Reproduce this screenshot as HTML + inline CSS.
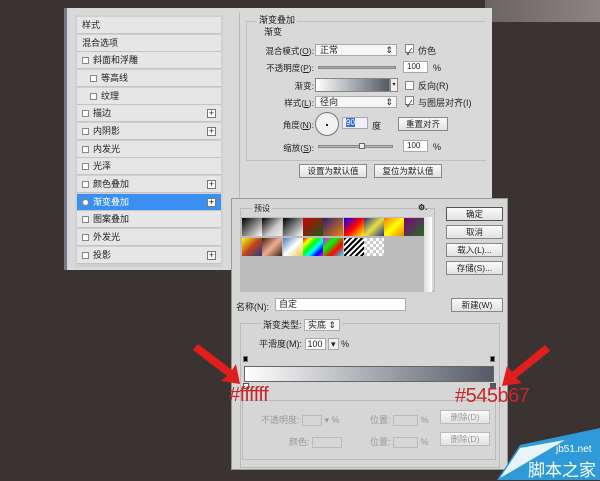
<!DOCTYPE html>
<html><head><meta charset="utf-8"><style>
*{margin:0;padding:0;box-sizing:border-box}
body{width:600px;height:480px;background:#3b3331;position:relative;overflow:hidden;font-family:"Liberation Sans","Noto Sans CJK SC",sans-serif;font-size:9px;color:#222}
.a{position:absolute}
.row{position:absolute;left:77px;width:144px;height:17px;background:#e6e6e6;border-bottom:1px solid #c4c4c4;line-height:16px;padding-left:5px;font-size:9px}
.cb{display:inline-block;width:7px;height:7px;border:1px solid #888;background:#fff;margin-right:4px;vertical-align:-1px}
.plus{position:absolute;right:5px;top:4px;width:9px;height:9px;border:1px solid #777;background:#fff;font-size:9px;line-height:7px;text-align:center}
.inp{position:absolute;background:#fff;border:1px solid #aaa;height:12px;font-size:8px;line-height:10px;padding-left:3px}
.sel{position:absolute;background:#f6f6f6;border:1px solid #aaa;height:12px;font-size:9px;line-height:10px;padding-left:4px}
.btn{position:absolute;background:linear-gradient(#fafafa,#e2e2e2);border:1px solid #888;height:14px;font-size:8.5px;line-height:12px;text-align:center}
.lbl{position:absolute;font-size:8.5px;text-align:right}
.sw{position:absolute;width:20px;height:18px}
.red{position:absolute;color:#c42828;font-size:20px;font-family:"Liberation Sans",sans-serif;letter-spacing:-0.5px}
</style></head><body>
<div class="a" style="left:485px;top:0;width:115px;height:22px;background:linear-gradient(90deg,#6a6462,#8a8482)"></div>
<div class="a" style="left:64px;top:8px;width:428px;height:262px;background:#d9d9d9;border-left:3px solid #7a7a88"></div>
<div class="a" style="left:75px;top:15px;width:148px;height:252px;background:#d0d0d0"></div>
<div class="row" style="top:17px">样式</div>
<div class="row" style="top:35px">混合选项</div>
<div class="row" style="top:52px"><span class="cb"></span>斜面和浮雕</div>
<div class="row" style="top:70px;padding-left:13px"><span class="cb"></span>等高线</div>
<div class="row" style="top:88px;padding-left:13px"><span class="cb"></span>纹理</div>
<div class="row" style="top:105px"><span class="cb"></span>描边<span class="plus">+</span></div>
<div class="row" style="top:123px"><span class="cb"></span>内阴影<span class="plus">+</span></div>
<div class="row" style="top:141px"><span class="cb"></span>内发光</div>
<div class="row" style="top:158px"><span class="cb"></span>光泽</div>
<div class="row" style="top:176px"><span class="cb"></span>颜色叠加<span class="plus">+</span></div>
<div class="row" style="top:194px;background:#3a8ff0;color:#fff"><span class="cb" style="border-radius:50%"></span>渐变叠加<span class="plus" style="color:#000">+</span></div>
<div class="row" style="top:211px"><span class="cb"></span>图案叠加</div>
<div class="row" style="top:229px"><span class="cb"></span>外发光</div>
<div class="row" style="top:247px"><span class="cb"></span>投影<span class="plus">+</span></div>
<div class="a" style="left:239px;top:12px;width:1px;height:190px;background:#bbb"></div>
<div class="a" style="left:246px;top:21px;width:240px;height:140px;border:1px solid #c0c0c0;border-right:none"></div>
<div class="a" style="left:257px;top:13px;background:#d9d9d9;padding:0 2px;font-size:9px">渐变叠加</div>
<div class="a" style="left:264px;top:25px;font-size:9px">渐变</div>
<div class="lbl" style="left:240px;width:74px;top:45px">混合模式(<u>O</u>):</div>
<div class="sel" style="left:315px;top:44px;width:82px">正常<span style="float:right;padding-right:3px">⇕</span></div>
<div class="a" style="left:405px;top:44px;font-size:9px"><span class="cb" style="width:9px;height:9px">✓</span>仿色</div>
<div class="lbl" style="left:240px;width:74px;top:62px">不透明度(<u>P</u>):</div>
<div class="a" style="left:318px;top:66px;width:78px;height:3px;background:#aaa;border:1px solid #888"></div>
<div class="inp" style="left:403px;top:61px;width:25px">100</div><div class="a" style="left:433px;top:63px">%</div>
<div class="lbl" style="left:240px;width:74px;top:80px">渐变:</div>
<div class="a" style="left:315px;top:78px;width:75px;height:14px;border:1px solid #888;background:linear-gradient(90deg,#fff,#545b67)"></div>
<div class="a" style="left:390px;top:78px;width:8px;height:14px;border:1px solid #888;background:#eee;font-size:6px;line-height:12px;text-align:center">▾</div>
<div class="a" style="left:405px;top:79px"><span class="cb" style="width:9px;height:9px"></span>反向(R)</div>
<div class="lbl" style="left:240px;width:74px;top:97px">样式(<u>L</u>):</div>
<div class="sel" style="left:315px;top:96px;width:82px">径向<span style="float:right;padding-right:3px">⇕</span></div>
<div class="a" style="left:405px;top:96px"><span class="cb" style="width:9px;height:9px">✓</span>与图层对齐(I)</div>
<div class="lbl" style="left:240px;width:74px;top:119px">角度(<u>N</u>):</div>
<div class="a" style="left:315px;top:112px;width:24px;height:24px;border-radius:50%;border:1px solid #777;background:#f2f2f2"></div>
<div class="a" style="left:326px;top:124px;width:2px;height:2px;background:#222"></div>
<div class="inp" style="left:342px;top:117px;width:26px;background:#eef"><span style="background:#3a6ed8;color:#fff">90</span></div>
<div class="a" style="left:372px;top:119px">度</div>
<div class="btn" style="left:398px;top:117px;width:50px">重置对齐</div>
<div class="lbl" style="left:240px;width:74px;top:142px">缩放(<u>S</u>):</div>
<div class="a" style="left:318px;top:145px;width:75px;height:3px;background:#bbb;border:1px solid #888"></div>
<div class="a" style="left:359px;top:143px;width:6px;height:6px;border:1px solid #666;background:#eee"></div>
<div class="inp" style="left:403px;top:140px;width:25px">100</div><div class="a" style="left:433px;top:142px">%</div>
<div class="btn" style="left:299px;top:164px;width:68px">设置为默认值</div>
<div class="btn" style="left:374px;top:164px;width:68px">复位为默认值</div>
<div class="a" style="left:231px;top:198px;width:277px;height:272px;background:#d6d6d6;border:1px solid #999"></div>
<div class="a" style="left:240px;top:208px;width:195px;height:84px;border:1px solid #bbb"></div>
<div class="a" style="left:252px;top:203px;background:#d6d6d6;padding:0 2px;font-size:8px">预设</div>
<div class="a" style="left:418px;top:203px;font-size:8px;font-weight:bold">⚙.</div>
<div class="a" style="left:241px;top:217px;width:183px;height:75px;background:#bcbcbc"></div>
<div class="a" style="left:424px;top:217px;width:8px;height:75px;background:linear-gradient(90deg,#ddd,#fff)"></div>
<div class="sw" style="left:242px;top:218px;background:linear-gradient(135deg,#000,#fff)"></div>
<div class="sw" style="left:262px;top:218px;background:linear-gradient(135deg,#000,#ccc 60%,#eee)"></div>
<div class="sw" style="left:283px;top:218px;background:linear-gradient(135deg,#000,#fff)"></div>
<div class="sw" style="left:303px;top:218px;background:linear-gradient(135deg,#c00,#1a5a1a)"></div>
<div class="sw" style="left:323px;top:218px;background:linear-gradient(135deg,#2a2080,#f08000)"></div>
<div class="sw" style="left:344px;top:218px;background:linear-gradient(135deg,#00f,#f00,#ff0)"></div>
<div class="sw" style="left:364px;top:218px;background:linear-gradient(135deg,#203090,#e8e040,#203090)"></div>
<div class="sw" style="left:384px;top:218px;background:linear-gradient(135deg,#f08000,#ff0,#f08000)"></div>
<div class="sw" style="left:404px;top:218px;background:linear-gradient(135deg,#800080,#207020)"></div>
<div class="sw" style="left:242px;top:238px;background:linear-gradient(135deg,#ff0,#c04020,#204080)"></div>
<div class="sw" style="left:262px;top:238px;background:linear-gradient(135deg,#402010,#f0b090,#402010)"></div>
<div class="sw" style="left:283px;top:238px;background:linear-gradient(135deg,#4080c0,#fff,#f0c040)"></div>
<div class="sw" style="left:303px;top:238px;background:linear-gradient(135deg,#f00,#ff0,#0f0,#0ff,#00f,#f0f)"></div>
<div class="sw" style="left:323px;top:238px;background:linear-gradient(135deg,#f0f,#0f0,#f00,#0ff)"></div>
<div class="sw" style="left:344px;top:238px;background:repeating-linear-gradient(135deg,#000 0 2px,#fff 2px 4px)"></div>
<div class="sw" style="left:364px;top:238px;background:repeating-conic-gradient(#ccc 0 25%,#fff 0 50%) 0 0/6px 6px"></div>
<div class="btn" style="left:446px;top:207px;width:57px;border-color:#555">确定</div>
<div class="btn" style="left:446px;top:225px;width:57px">取消</div>
<div class="btn" style="left:446px;top:243px;width:57px">载入(L)...</div>
<div class="btn" style="left:446px;top:261px;width:57px">存储(S)...</div>
<div class="a" style="left:236px;top:300px">名称(N):</div>
<div class="inp" style="left:275px;top:298px;width:131px;height:13px;font-size:9px">自定</div>
<div class="btn" style="left:451px;top:298px;width:52px">新建(W)</div>
<div class="a" style="left:240px;top:323px;width:260px;height:145px;border:1px solid #bbb"></div>
<div class="a" style="left:261px;top:318px;background:#d6d6d6;padding:0 2px">渐变类型: <span style="background:#f6f6f6;border:1px solid #aaa;padding:0 3px">实底 ⇕</span></div>
<div class="a" style="left:259px;top:337px">平滑度(M): <span style="background:#fff;border:1px solid #aaa;padding:0 2px">100</span> <span style="border:1px solid #aaa;background:#eee;padding:0 2px">▾</span> %</div>
<div class="a" style="left:244px;top:366px;width:250px;height:16px;background:linear-gradient(90deg,#fff,#545b67);border:1px solid #666"></div>
<div class="a" style="left:243px;top:356px;width:5px;height:6px;background:#000;border:1px solid #777"></div>
<div class="a" style="left:490px;top:356px;width:5px;height:6px;background:#000;border:1px solid #777"></div>
<div class="a" style="left:243px;top:383px;width:6px;height:6px;background:#fff;border:1px solid #555"></div>
<div class="a" style="left:490px;top:383px;width:6px;height:6px;background:#545b67;border:1px solid #555"></div>
<div class="a" style="left:242px;top:400px;width:254px;height:60px;border:1px solid #bbb"></div>
<div class="a" style="left:261px;top:413px;color:#999">不透明度: <span style="display:inline-block;width:20px;height:11px;border:1px solid #bbb;vertical-align:middle"></span> ▾ %</div>
<div class="a" style="left:289px;top:435px;color:#999">颜色: <span style="display:inline-block;width:30px;height:11px;border:1px solid #bbb;vertical-align:middle"></span></div>
<div class="a" style="left:370px;top:413px;color:#999">位置: <span style="display:inline-block;width:25px;height:11px;border:1px solid #bbb;vertical-align:middle"></span> %</div>
<div class="a" style="left:370px;top:435px;color:#999">位置: <span style="display:inline-block;width:25px;height:11px;border:1px solid #bbb;vertical-align:middle"></span> %</div>
<div class="btn" style="left:440px;top:410px;width:50px;color:#999;border-color:#bbb">删除(D)</div>
<div class="btn" style="left:440px;top:432px;width:50px;color:#999;border-color:#bbb">删除(D)</div>
<div class="red" style="left:229px;top:384px">#ffffff</div>
<div class="red" style="left:455px;top:385px">#545b67</div>
<svg class="a" style="left:0;top:0" width="600" height="480">
<g fill="#e01e1e"><path d="M198 344 L232 370 L236 364 L240 384 L221 381 L227 376 L193 350Z"/><path d="M545 345 L512 372 L507 366 L502 386 L522 383 L516 378 L550 351Z"/></g>
<path d="M497 480 L520 445 L600 428 L600 480Z" fill="#2f9ad8"/><path d="M500 478 L520 448 L565 440Z" fill="#e8f4fb"/>
</svg>
<div class="a" style="left:556px;top:444px;color:#fff;font-size:10px">jb51.net</div>
<div class="a" style="left:528px;top:456px;color:#fff;font-size:17px;font-family:'Noto Sans CJK SC',sans-serif">脚本之家</div>
</body></html>
